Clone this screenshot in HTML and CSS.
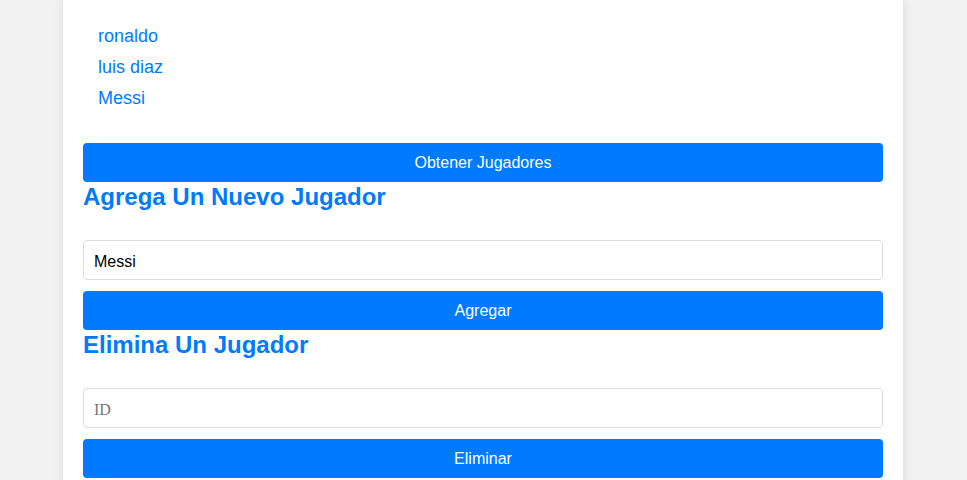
FILE: index.html
```html
<!DOCTYPE html>
<html lang="es">
<head>
<meta charset="utf-8">
<title>Jugadores</title>
<link rel="stylesheet" href="styles.css">
</head>
<body>
<div class="container">
  <ul class="players">
    <li>ronaldo</li>
    <li>luis diaz</li>
    <li>Messi</li>
  </ul>
  <button class="btn">Obtener Jugadores</button>
  <h2 class="title">Agrega Un Nuevo Jugador</h2>
  <input class="field" type="text" value="Messi">
  <button class="btn">Agregar</button>
  <h2 class="title">Elimina Un Jugador</h2>
  <input class="field" type="text" placeholder="ID">
  <button class="btn">Eliminar</button>
</div>
</body>
</html>
```
FILE: styles.css
```css
html, body {
  margin: 0;
  padding: 0;
  background: #f2f2f2;
  font-family: "Liberation Sans", Arial, sans-serif;
}
body {
  padding-right: 1px;
}
.container {
  width: 800px;
  margin: 0 auto;
  padding: 20px 20px 40px;
  background: #fff;
  box-shadow: 0 0 10px rgba(0, 0, 0, 0.1);
  display: flex;
  flex-direction: column;
}
.players {
  list-style: none;
  margin: 0 0 30px;
  padding: 0;
}
.players li {
  padding: 6px 15px 4px;
  font-size: 18px;
  line-height: 21px;
  color: #007bff;
}
.btn {
  height: 39px;
  border: none;
  border-radius: 4px;
  background: #007bff;
  color: #fff;
  font-family: "Liberation Sans", Arial, sans-serif;
  font-size: 16px;
  padding: 1px 0 0;
  margin: 0;
}
.title {
  margin: 0 0 29px;
  padding-top: 1px;
  font-size: 24px;
  line-height: 28px;
  font-weight: bold;
  color: #007bff;
}
.field {
  box-sizing: border-box;
  height: 40px;
  margin: 0 0 11px;
  padding: 3px 10px 0;
  border: 1px solid #ddd;
  border-radius: 4px;
  font-family: "Liberation Sans", Arial, sans-serif;
  font-size: 16px;
  color: #000;
  outline: none;
}
.field::placeholder {
  font-family: "Liberation Serif", "Times New Roman", serif;
  color: #757575;
}
```
